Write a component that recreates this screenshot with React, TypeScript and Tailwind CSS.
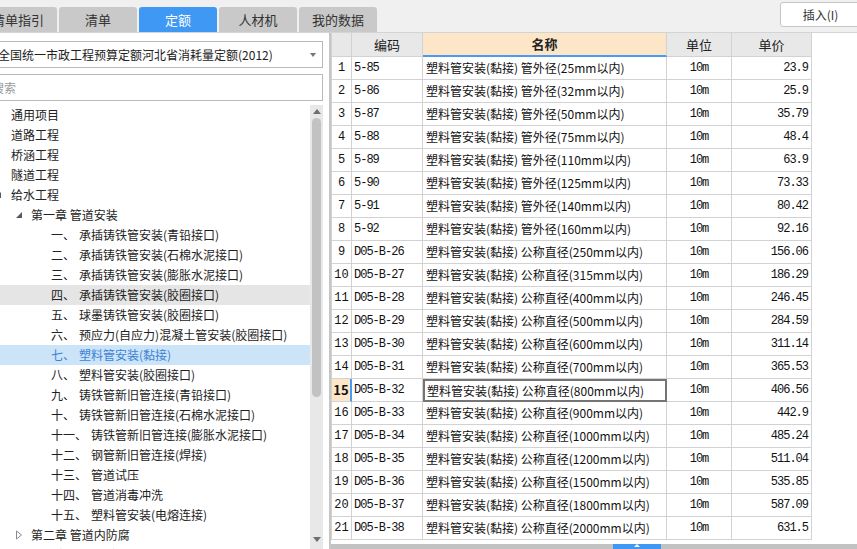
import React from "react";

type Row = { code: string; name: string; price: string };

const rows: Row[] = [
  { code: "5-85", name: "管外径(25mm以内)", price: "23.9" },
  { code: "5-86", name: "管外径(32mm以内)", price: "25.9" },
  { code: "5-87", name: "管外径(50mm以内)", price: "35.79" },
  { code: "5-88", name: "管外径(75mm以内)", price: "48.4" },
  { code: "5-89", name: "管外径(110mm以内)", price: "63.9" },
  { code: "5-90", name: "管外径(125mm以内)", price: "73.33" },
  { code: "5-91", name: "管外径(140mm以内)", price: "80.42" },
  { code: "5-92", name: "管外径(160mm以内)", price: "92.16" },
  { code: "D05-B-26", name: "公称直径(250mm以内)", price: "156.06" },
  { code: "D05-B-27", name: "公称直径(315mm以内)", price: "186.29" },
  { code: "D05-B-28", name: "公称直径(400mm以内)", price: "246.45" },
  { code: "D05-B-29", name: "公称直径(500mm以内)", price: "284.59" },
  { code: "D05-B-30", name: "公称直径(600mm以内)", price: "311.14" },
  { code: "D05-B-31", name: "公称直径(700mm以内)", price: "365.53" },
  { code: "D05-B-32", name: "公称直径(800mm以内)", price: "406.56" },
  { code: "D05-B-33", name: "公称直径(900mm以内)", price: "442.9" },
  { code: "D05-B-34", name: "公称直径(1000mm以内)", price: "485.24" },
  { code: "D05-B-35", name: "公称直径(1200mm以内)", price: "511.04" },
  { code: "D05-B-36", name: "公称直径(1500mm以内)", price: "535.85" },
  { code: "D05-B-37", name: "公称直径(1800mm以内)", price: "587.09" },
  { code: "D05-B-38", name: "公称直径(2000mm以内)", price: "631.5" },
];

type TreeItem = {
  label: string;
  prefix?: string;
  level: 0 | 1 | 2;
  arrow?: "open" | "closed";
  state?: "hover" | "selected";
};

const tree: TreeItem[] = [
  { label: "通用项目", level: 0 },
  { label: "道路工程", level: 0 },
  { label: "桥涵工程", level: 0 },
  { label: "隧道工程", level: 0 },
  { label: "给水工程", level: 0, arrow: "open" },
  { label: "第一章 管道安装", level: 1, arrow: "open" },
  { prefix: "一、", label: "承插铸铁管安装(青铅接口)", level: 2 },
  { prefix: "二、", label: "承插铸铁管安装(石棉水泥接口)", level: 2 },
  { prefix: "三、", label: "承插铸铁管安装(膨胀水泥接口)", level: 2 },
  { prefix: "四、", label: "承插铸铁管安装(胶圈接口)", level: 2, state: "hover" },
  { prefix: "五、", label: "球墨铸铁管安装(胶圈接口)", level: 2 },
  { prefix: "六、", label: "预应力(自应力)混凝土管安装(胶圈接口)", level: 2 },
  { prefix: "七、", label: "塑料管安装(黏接)", level: 2, state: "selected" },
  { prefix: "八、", label: "塑料管安装(胶圈接口)", level: 2 },
  { prefix: "九、", label: "铸铁管新旧管连接(青铅接口)", level: 2 },
  { prefix: "十、", label: "铸铁管新旧管连接(石棉水泥接口)", level: 2 },
  { prefix: "十一、", label: "铸铁管新旧管连接(膨胀水泥接口)", level: 2 },
  { prefix: "十二、", label: "钢管新旧管连接(焊接)", level: 2 },
  { prefix: "十三、", label: "管道试压", level: 2 },
  { prefix: "十四、", label: "管道消毒冲洗", level: 2 },
  { prefix: "十五、", label: "塑料管安装(电熔连接)", level: 2 },
  { label: "第二章 管道内防腐", level: 1, arrow: "closed" },
  { label: "第三章 管道外防腐", level: 1, arrow: "closed" },
];

const tabs = ["清单指引", "清单", "定额", "人材机", "我的数据"];

function TopBar() {
  return (
    <div className="flex h-[33px] shrink-0 items-end border-b border-[#d4d4d4] bg-[#f0f0f0]">
      <div className="ml-[-21px] flex gap-[2px]">
        {tabs.map((t) => (
          <div
            key={t}
            className={
              t === "定额"
                ? "flex h-[25px] w-[78px] items-center justify-center rounded-t-[3px] bg-[#3f98f4] text-[13px] text-white"
                : "flex h-[25px] w-[78px] items-center justify-center rounded-t-[3px] bg-[#c9c9c9] text-[13px] text-[#333]"
            }
          >
            {t}
          </div>
        ))}
      </div>
      <div className="ml-auto mr-[-4px] mb-[5px] flex h-[25px] w-[81px] items-center justify-center rounded-[3px] border border-[#c6c6c6] bg-white text-[12px] text-[#333]">
        插入(I)
      </div>
    </div>
  );
}

function Arrow({ kind }: { kind: "open" | "closed" }) {
  if (kind === "open") {
    return (
      <svg width="8" height="8" viewBox="0 0 8 8" className="shrink-0">
        <path d="M7 1 L7 7 L1 7 Z" fill="#595959" />
      </svg>
    );
  }
  return (
    <svg width="8" height="10" viewBox="0 0 8 10" className="shrink-0">
      <path d="M1.5 1 L6.5 5 L1.5 9 Z" fill="none" stroke="#8a8a8a" strokeWidth="1" />
    </svg>
  );
}

function TreeRow({ item }: { item: TreeItem }) {
  const bg =
    item.state === "hover" ? "bg-[#e5e5e5]" : item.state === "selected" ? "bg-[#cce4f7]" : "";
  const color = item.state === "selected" ? "text-[#3b82d6]" : "text-[#222]";
  return (
    <div className={`flex h-[20px] items-center text-[12px] ${bg} ${color}`}>
      {item.level === 0 && (
        <>
          <div className="ml-[-6px] flex w-[17px] items-center">{item.arrow && <Arrow kind={item.arrow} />}</div>
          <span>{item.label}</span>
        </>
      )}
      {item.level === 1 && (
        <>
          <div className="ml-[15px] flex w-[16px] items-center">{item.arrow && <Arrow kind={item.arrow} />}</div>
          <span>{item.label}</span>
        </>
      )}
      {item.level === 2 && (
        <>
          <span className="ml-[51px] whitespace-pre">{item.prefix}</span>
          <span className="ml-[4px] whitespace-nowrap">{item.label}</span>
        </>
      )}
    </div>
  );
}

function LeftPanel() {
  return (
    <div className="flex w-[329px] shrink-0 flex-col overflow-hidden bg-white">
      <div className="ml-[-8px] mt-[8px] flex h-[27px] w-[331px] items-center justify-between border border-[#b9b9b9] pl-[5px] pr-[6px] text-[12px] text-[#222]">
        <span className="whitespace-nowrap">全国统一市政工程预算定额河北省消耗量定额(2012)</span>
        <span className="mt-[1px] h-0 w-0 border-x-[3px] border-t-[4px] border-x-transparent border-t-[#777]" />
      </div>
      <div className="ml-[-20px] mt-[6px] flex h-[27px] w-[343px] items-center border border-[#b9b9b9] pl-[11px] text-[12px] text-[#9a9a9a]">
        搜索
      </div>
      <div className="mt-[4px] flex min-h-0 flex-1">
        <div className="min-w-0 flex-1 overflow-hidden">
          {tree.map((it, i) => (
            <TreeRow key={i} item={it} />
          ))}
        </div>
        <div className="mr-[6px] flex w-[13px] shrink-0 flex-col bg-[#e8e8e8]">
          <div className="flex h-[13px] shrink-0 items-center justify-center">
            <span className="h-0 w-0 border-x-[4px] border-b-[5px] border-x-transparent border-b-[#6e6e6e]" />
          </div>
          <div className="mx-[2px] h-[279px] shrink-0 rounded-[5px] bg-[#c2c2c2]" />
          <div className="flex-1" />
          <div className="flex h-[14px] shrink-0 items-start justify-center pt-[2px]">
            <span className="h-0 w-0 border-x-[4px] border-t-[5px] border-x-transparent border-t-[#6e6e6e]" />
          </div>
        </div>
      </div>
    </div>
  );
}

const cell = "flex items-center border-r border-b border-[#d2d2d2] overflow-hidden whitespace-nowrap";
const mono = "font-['Liberation_Mono','Noto_Sans_CJK_SC',monospace] tracking-[-1px]";

function DataTable() {
  return (
    <div className="w-[481px] border-l border-[#d2d2d2] text-[12px] text-[#111]">
      <div className="grid h-[24px] grid-cols-[20px_71px_244px_65px_80px] text-[13px] text-[#222]">
        <div className={`${cell} bg-[#e8e8e8]`} />
        <div className={`${cell} justify-center bg-[#e8e8e8]`}>编码</div>
        <div className="flex items-center justify-center border-b-2 border-r border-b-[#4a9bf0] border-r-[#d2d2d2] bg-[#fde6c8] font-bold">
          名称
        </div>
        <div className={`${cell} justify-center bg-[#e8e8e8]`}>单位</div>
        <div className={`${cell} justify-center bg-[#e8e8e8]`}>单价</div>
      </div>
      {rows.map((r, i) => {
        const sel = i === 14;
        const prefix = i < 8 ? "塑料管安装(黏接) " : "塑料管安装(黏接) ";
        return (
          <div key={r.code} className="grid h-[23px] grid-cols-[20px_71px_244px_65px_80px]">
            <div
              className={
                sel
                  ? `${cell} justify-center bg-[#fde6c8] font-bold text-[13px] border-r-2 border-r-[#4a9bf0]`
                  : `${cell} justify-center ${mono} tracking-normal text-[12px]`
              }
            >
              {i + 1}
            </div>
            <div className={`${cell} pl-[2px] ${mono}`}>{r.code}</div>
            <div
              className={
                sel
                  ? "flex items-center overflow-hidden whitespace-nowrap border-2 border-[#757575] pl-[2px]"
                  : `${cell} pl-[3px]`
              }
            >
              {prefix}
              {r.name}
            </div>
            <div className={`${cell} justify-center ${mono}`}>10m</div>
            <div className={`${cell} justify-end pr-[3px] ${mono}`}>{r.price}</div>
          </div>
        );
      })}
    </div>
  );
}

export default function App() {
  return (
    <div className="flex h-[549px] w-[857px] flex-col overflow-hidden bg-white font-['Noto_Sans_CJK_SC','Noto_Sans',sans-serif] text-[#222]">
      <TopBar />
      <div className="flex min-h-0 flex-1">
        <LeftPanel />
        <div className="w-[2px] shrink-0 bg-[#c6c6c6]" />
        <div className="flex min-w-0 flex-1 flex-col">
          <div className="min-h-0 flex-1 overflow-hidden">
            <DataTable />
          </div>
          <div className="relative h-[5px] shrink-0 bg-[#c2c2c2]">
            <div className="absolute left-[282px] top-0 flex h-[5px] w-[48px] justify-center bg-[#3f98f4]">
              <span className="h-0 w-0 border-x-[3px] border-b-[3px] border-x-transparent border-b-white" />
            </div>
          </div>
        </div>
      </div>
    </div>
  );
}
